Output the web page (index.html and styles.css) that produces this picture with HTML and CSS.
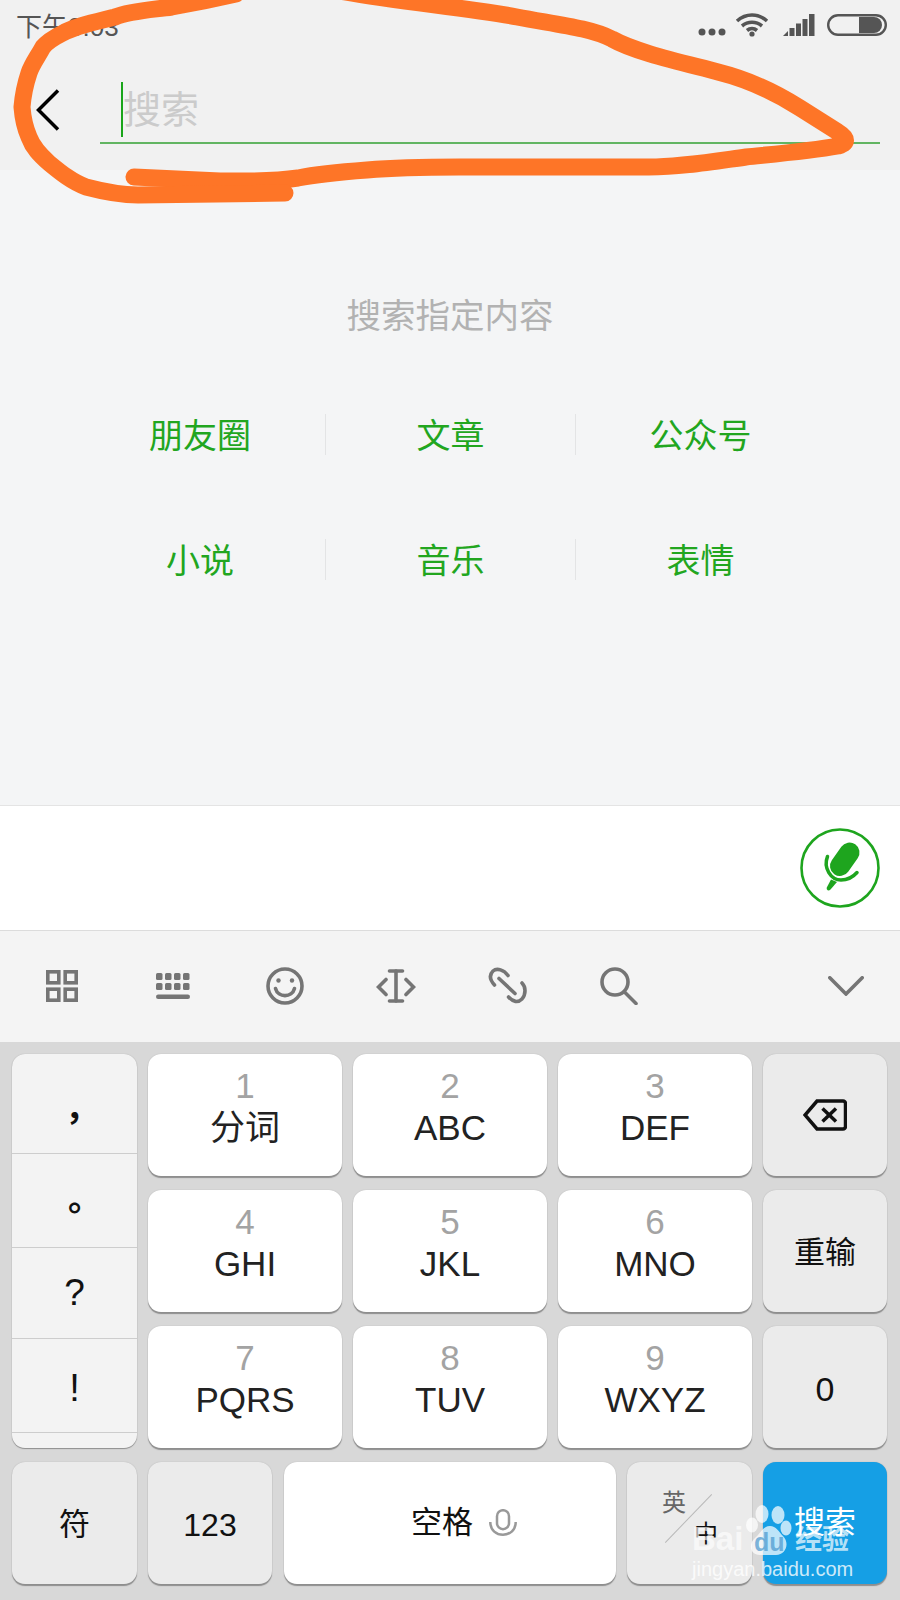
FILE: index.html
```html
<!DOCTYPE html>
<html>
<head>
  <meta charset="utf-8">
  <title>搜索</title>
  <link rel="stylesheet" href="styles.css">
</head>
<body>
  <div class="phone">
    <header class="top">
      <div class="status">
        <span class="time">下午3:03</span>
        <div class="status-icons">
          <svg class="dots" width="28" height="8" viewBox="0 0 28 8"><circle cx="4" cy="4" r="3.5"/><circle cx="14" cy="4" r="3.5"/><circle cx="24" cy="4" r="3.5"/></svg>
          <svg class="wifi" width="34" height="24" viewBox="0 0 34 24"><path d="M2 8 C11 0 23 0 32 8" /><path d="M7 13 C13 8 21 8 27 13" /><path d="M12 17.5 C15 15 19 15 22 17.5" /><circle cx="17" cy="21" r="2.6" class="fill"/></svg>
          <svg class="signal" width="32" height="22" viewBox="0 0 32 22"><path d="M0 22 L5 17 V22 Z"/><rect x="6.5" y="14" width="5" height="8"/><rect x="13" y="9.5" width="5" height="12.5"/><rect x="19.5" y="5" width="5" height="17"/><rect x="26" y="0" width="5.5" height="22"/></svg>
          <svg class="battery" width="60" height="22" viewBox="0 0 60 22"><rect x="1.2" y="1.2" width="57.6" height="19.6" rx="9.8"/><path class="fill" d="M32 3 H47 A8 8 0 0 1 47 19 H32 Z"/></svg>
        </div>
      </div>
      <div class="search-row">
        <svg class="back" width="24" height="42" viewBox="0 0 24 42"><path d="M22 1.5 L2.5 21 L22 40.5"/></svg>
        <div class="field">
          <div class="field-inner">
            <span class="caret"></span>
            <span class="placeholder">搜索</span>
          </div>
        </div>
      </div>
    </header>

    <main class="content">
      <p class="hint">搜索指定内容</p>
      <div class="options">
        <div class="option">朋友圈</div>
        <div class="option">文章</div>
        <div class="option">公众号</div>
        <div class="option">小说</div>
        <div class="option">音乐</div>
        <div class="option">表情</div>
      </div>
    </main>

    <div class="voice-bar">
      <svg class="voice-btn" width="80" height="80" viewBox="0 0 80 80">
        <circle class="ring" cx="40" cy="40" r="38.5"/>
        <path class="capsule" d="M49.5 24.5 L40 38"/>
        <path class="arc" d="M27.5 28.5 C23 40 31 52 41 52 C47 52 53 49 57 44.5"/>
        <path class="stem" d="M31 51.5 L37 54 L30.5 61.5 C28.5 63.5 26 62 26.8 59.5 Z"/>
      </svg>
    </div>

    <div class="tools">
      <div class="tool">
        <svg class="grid-icon" width="32" height="32" viewBox="0 0 32 32"><rect x="1.8" y="1.8" width="11" height="11"/><rect x="19.2" y="1.8" width="11" height="11"/><rect x="1.8" y="19.2" width="11" height="11"/><rect x="19.2" y="19.2" width="11" height="11"/></svg>
      </div>
      <div class="tool">
        <svg class="solid" width="34" height="26" viewBox="0 0 34 26"><rect x="0" y="0" width="6.5" height="7" rx="1.5"/><rect x="9" y="0" width="6.5" height="7" rx="1.5"/><rect x="18" y="0" width="6.5" height="7" rx="1.5"/><rect x="27" y="0" width="6.5" height="7" rx="1.5"/><rect x="0" y="10" width="6.5" height="7" rx="1.5"/><rect x="9" y="10" width="6.5" height="7" rx="1.5"/><rect x="18" y="10" width="6.5" height="7" rx="1.5"/><rect x="27" y="10" width="6.5" height="7" rx="1.5"/><rect x="0" y="21.5" width="34" height="4.5" rx="2.2"/></svg>
      </div>
      <div class="tool">
        <svg class="bold-icon" width="38" height="38" viewBox="0 0 38 38"><circle cx="19" cy="19" r="17"/><circle class="fill" cx="12.5" cy="13.5" r="2.2"/><circle class="fill" cx="26" cy="13.5" r="2.2"/><path d="M9.5 21.5 C12 31 26 31 28.5 21.5"/></svg>
      </div>
      <div class="tool">
        <svg class="bold-icon" width="40" height="34" viewBox="0 0 40 34"><path d="M10 10.5 L2.5 18 L10 25.5"/><path d="M30 10.5 L37.5 18 L30 25.5"/><path d="M20 2 V32"/><path d="M13.5 2 H26.5"/><path d="M13.5 32 H26.5"/></svg>
      </div>
      <div class="tool">
        <svg class="bold-icon" width="40" height="40" viewBox="0 0 40 40"><path d="M20 9.5 C16 4 9 1.5 5 5 C1 9 2 14 6.5 19"/><path d="M34 17 C38 21 38 28 34 33 C30 37 25 36 20.5 31"/><path d="M11 12.5 L27 27.5"/></svg>
      </div>
      <div class="tool">
        <svg class="bold-icon" width="38" height="38" viewBox="0 0 38 38"><circle cx="15" cy="15" r="13"/><path d="M24.5 25 L36 36.5"/></svg>
      </div>
      <div class="tool tool-last">
        <svg class="bold-icon" width="36" height="20" viewBox="0 0 36 20"><path d="M1.8 1.8 L18 18 L34.2 1.8"/></svg>
      </div>
    </div>

    <div class="keyboard">
      <div class="punct">
        <div class="punct-cell p1"><span class="cjk-mark">，</span></div>
        <div class="punct-cell p2"><span class="cjk-mark">。</span></div>
        <div class="punct-cell p3">?</div>
        <div class="punct-cell p4">!</div>
        <div class="punct-cell p5"></div>
      </div>
      <div class="key"><span class="num">1</span><span class="label">分词</span></div>
      <div class="key"><span class="num">2</span><span class="label">ABC</span></div>
      <div class="key"><span class="num">3</span><span class="label">DEF</span></div>
      <div class="key fn">
        <svg class="backspace" width="44" height="32" viewBox="0 0 44 32"><path d="M14 2 H40 A2.5 2.5 0 0 1 42.5 4.5 V27.5 A2.5 2.5 0 0 1 40 30 H14 L2 16 Z"/><path d="M19.5 9.5 L33 22.5"/><path d="M33 9.5 L19.5 22.5"/></svg>
      </div>
      <div class="key"><span class="num">4</span><span class="label">GHI</span></div>
      <div class="key"><span class="num">5</span><span class="label">JKL</span></div>
      <div class="key"><span class="num">6</span><span class="label">MNO</span></div>
      <div class="key fn"><span class="fn-text">重输</span></div>
      <div class="key"><span class="num">7</span><span class="label">PQRS</span></div>
      <div class="key"><span class="num">8</span><span class="label">TUV</span></div>
      <div class="key"><span class="num">9</span><span class="label">WXYZ</span></div>
      <div class="key fn"><span class="fn-text fn-zero">0</span></div>

      <div class="bottom-row">
        <div class="key fn w-fu"><span class="fn-text">符</span></div>
        <div class="key fn w-123"><span class="fn-text">123</span></div>
        <div class="key w-space">
          <span class="fn-text">空格</span>
          <svg class="space-mic" width="28" height="28" viewBox="0 0 28 28"><rect x="8" y="1.2" width="12" height="19" rx="6"/><path d="M1.3 13 C1.3 30 26.7 30 26.7 13"/></svg>
        </div>
        <div class="key fn w-lang">
          <span class="lang-en">英</span>
          <span class="lang-slash"></span>
          <span class="lang-cn">中</span>
        </div>
        <div class="key go"><span class="fn-text">搜索</span></div>
      </div>
    </div>

    <div class="watermark">
      <div class="wm-top">
        <span class="wm-bai">Bai</span>
        <span class="wm-paw">
          <svg width="47" height="51" viewBox="0 0 47 51"><ellipse cx="17" cy="9" rx="6.5" ry="9"/><ellipse cx="33" cy="10" rx="6.5" ry="9"/><ellipse cx="7" cy="20" rx="6" ry="7.5"/><ellipse cx="41" cy="23" rx="5.5" ry="7.5"/><path d="M25 21 C31 21 34 27 38 31 C45 38 41 50 31 50 H15 C5 50 3 39 10 33 C16 28 18 21 25 21 Z"/></svg>
          <span class="wm-du">du</span>
        </span>
        <span class="wm-cn">经验</span>
      </div>
      <div class="wm-url">jingyan.baidu.com</div>
    </div>

    <svg class="scribble" width="900" height="210" viewBox="0 0 900 210">
      <path d="M345 -8 C400 2 470 8 517 17 C560 25 590 28 612 39 C635 52 680 62 718 72 C750 80 775 92 800 108 L838 132 C848 138 848 143 838 146 C810 151 775 154 746 157 C710 162 680 167 649 167 L459 167 C420 167 390 168 367 170 C340 172 318 174 298 178 C270 182 245 181 220 181 L134 177"/>
      <path d="M236 -6 C210 0 195 3 172 7 C150 10 130 11 115 17 C95 22 75 26 63 33 C55 37 48 41 43 47 C37 58 32 64 29 73 C25 85 23 95 22 107 C23 120 25 128 29 137 C33 148 40 155 49 163 C60 172 72 182 86 187 C105 192 120 195 138 195 L285 193"/>
    </svg>
  </div>
</body>
</html>
```

FILE: styles.css
```css
html, body {
  margin: 0;
  padding: 0;
}

body {
  font-family: "Liberation Sans", "Noto Sans CJK SC", sans-serif;
  color: #111;
}

.phone {
  position: relative;
  width: 900px;
  height: 1600px;
  overflow: hidden;
  display: flex;
  flex-direction: column;
}

/* header */
.top {
  height: 170px;
  background-color: #f1f1f1;
}

.status {
  height: 52px;
  display: flex;
  justify-content: space-between;
  align-items: flex-start;
  padding: 0 13px 0 16px;
}

.time {
  font-size: 26px;
  line-height: 30px;
  margin-top: 12px;
  color: #555;
}

.status-icons {
  display: flex;
  align-items: flex-start;
  margin-top: 14px;
}

.dots {
  fill: #555;
  margin: 14px 0 0 0;
}

.wifi {
  margin: -1px 0 0 9px;
  fill: none;
  stroke: #555;
  stroke-width: 3.6;
}

.wifi .fill {
  fill: #555;
  stroke: none;
}

.signal {
  fill: #555;
  margin: 0 0 0 14px;
}

.battery {
  margin: 0 0 0 12px;
  fill: none;
  stroke: #555;
  stroke-width: 2.4;
}

.battery .fill {
  fill: #555;
  stroke: none;
}

.search-row {
  display: flex;
  padding-left: 36px;
}

.back {
  margin-top: 37px;
  fill: none;
  stroke: #000;
  stroke-width: 3.5;
}

.field {
  margin-left: 40px;
  width: 780px;
  height: 92px;
  box-sizing: border-box;
  border-bottom: 2px solid #62b562;
  display: flex;
  align-items: flex-end;
  padding: 0 0 5px 21px;
}

.field-inner {
  height: 55px;
  display: flex;
  align-items: center;
}

.caret {
  width: 2px;
  height: 55px;
  background-color: #1aa51a;
}

.placeholder {
  font-size: 38px;
  line-height: 55px;
  padding-top: 2px;
  color: #cbcbcb;
}

/* middle */
.content {
  height: 635px;
  background-color: #f4f5f6;
}

.hint {
  margin: 0;
  padding-top: 121px;
  font-size: 34.5px;
  line-height: 50px;
  color: #b2b2b2;
  text-align: center;
}

.options {
  margin-top: 73px;
  padding: 0 75px;
  display: grid;
  grid-template-columns: 250px 250px 250px;
  row-gap: 84px;
}

.option {
  height: 41px;
  line-height: 45px;
  font-size: 34px;
  color: #22a61f;
  text-align: center;
  box-sizing: border-box;
}

.option:nth-child(3n+2),
.option:nth-child(3n) {
  border-left: 1px solid #e3e4e5;
}

.voice-bar {
  height: 126px;
  box-sizing: border-box;
  background-color: #fff;
  border-top: 1px solid #e4e4e4;
  border-bottom: 1px solid #dcdcdc;
  display: flex;
  justify-content: flex-end;
  align-items: center;
  padding-right: 20px;
}

.voice-btn {
  fill: none;
  stroke: #1ea51e;
}

.voice-btn .ring {
  stroke-width: 2.6;
}

.voice-btn .capsule {
  stroke-width: 20;
  stroke-linecap: round;
}

.voice-btn .arc {
  stroke-width: 3.5;
  stroke-linecap: round;
}

.voice-btn .stem {
  fill: #1ea51e;
  stroke: none;
}

/* toolbar */
.tools {
  height: 111px;
  background-color: #f4f4f4;
  display: flex;
  align-items: center;
  padding: 0 36px 0 6px;
  box-sizing: border-box;
}

.tool {
  width: 111.5px;
  display: flex;
  justify-content: center;
  margin-top: -2px;
}

.tool svg {
  fill: none;
  stroke: #757575;
  stroke-width: 3;
  stroke-linecap: round;
}

.tool svg.bold-icon {
  stroke-width: 3.6;
}

.tool svg.grid-icon {
  stroke-width: 3.6;
  stroke-linecap: butt;
}

.tool svg.solid {
  fill: #757575;
  stroke: none;
}

.tool svg .fill {
  fill: #757575;
  stroke: none;
}

.tool-last {
  width: 36px;
  margin-left: auto;
}

/* keyboard */
.keyboard {
  flex: 1;
  background-color: #d8d8d8;
  padding: 12px 13px 0 12px;
  display: grid;
  grid-template-columns: 125px 194px 194px 194px 124px;
  grid-template-rows: 122px 122px 122px 122px;
  column-gap: 11px;
  row-gap: 14px;
}

.key {
  background-color: #fff;
  border-radius: 13px;
  box-shadow: 0 2px 1px #8e8e8e, 0 0 1px #a5a5a5;
  display: flex;
  flex-direction: column;
  align-items: center;
  padding-top: 10px;
  box-sizing: border-box;
}

.num {
  font-size: 35px;
  line-height: 43px;
  color: #a3a3a3;
}

.label {
  font-size: 35px;
  line-height: 42px;
  color: #222;
}

.fn {
  background-color: #ebebeb;
  justify-content: center;
  padding-top: 4px;
}

.go, .w-space {
  justify-content: center;
  padding-top: 0;
}

.fn-text {
  font-size: 31px;
  line-height: 40px;
}

.fn-zero {
  font-size: 34px;
}

.go {
  background-color: #159fe5;
  color: #fff;
}

.punct {
  grid-row: 1 / 4;
  background-color: #f3f3f3;
  border-radius: 13px;
  box-shadow: 0 1px 1px #8e8e8e, 0 0 1px #a5a5a5;
  display: flex;
  flex-direction: column;
  overflow: hidden;
}

.punct-cell {
  box-sizing: border-box;
  display: flex;
  justify-content: center;
  align-items: center;
  border-bottom: 1px solid #cdcdcd;
  font-size: 34px;
}

.p1 { height: 100px; padding-top: 26px; }
.p2 { height: 94px; padding-top: 14px; }
.p3 { height: 92px; padding-top: 0; font-size: 37px; }
.p4 { height: 94px; padding-top: 6px; font-size: 38px; }
.p5 { height: 15px; border-bottom: none; }

.cjk-mark {
  font-family: "Noto Sans CJK TC", sans-serif;
  font-weight: bold;
  line-height: 40px;
}

.bottom-row {
  grid-column: 1 / 6;
  display: flex;
}

.w-fu { width: 125px; margin-right: 11px; }
.w-123 { width: 124px; margin-right: 12px; }
.w-space { width: 332px; margin-right: 11px; flex-direction: row; padding-left: 28px; }
.w-lang { width: 125px; margin-right: 11px; position: relative; }
.go { width: 124px; }

.w-123 .fn-text { font-size: 32px; }

.space-mic {
  margin-left: 16px;
  fill: none;
  stroke: #999;
  stroke-width: 2.5;
}

.backspace {
  fill: none;
  stroke: #111;
  stroke-width: 3.5;
  margin-top: -4px;
}

.lang-en {
  position: absolute;
  left: 35px;
  top: 27px;
  font-size: 24px;
  line-height: 28px;
  color: #666;
}

.lang-cn {
  position: absolute;
  left: 67px;
  top: 58px;
  font-size: 24px;
  line-height: 28px;
  color: #111;
}

.lang-slash {
  position: absolute;
  left: 61px;
  top: 23px;
  width: 1px;
  height: 67px;
  background-color: #b8b8b8;
  transform: rotate(44deg);
}

/* overlays */
.watermark {
  position: absolute;
  left: 692px;
  top: 1502px;
  width: 165px;
  color: rgba(255, 255, 255, 0.8);
}

.wm-top {
  display: flex;
  align-items: flex-end;
  height: 54px;
}

.wm-bai {
  font-size: 33px;
  font-weight: bold;
  line-height: 34px;
  width: 53px;
  color: rgba(255, 255, 255, 0.65);
}

.wm-paw {
  position: relative;
  width: 47px;
  height: 51px;
  fill: rgba(255, 255, 255, 0.72);
}

.wm-du {
  position: absolute;
  left: 9px;
  bottom: 1px;
  font-size: 25px;
  font-weight: bold;
  line-height: 26px;
  color: rgba(70, 150, 205, 0.7);
}

.wm-cn {
  font-size: 27px;
  font-weight: bold;
  line-height: 32px;
  margin-left: 3px;
  color: rgba(255, 255, 255, 0.7);
}

.wm-url {
  margin-top: 1px;
  font-size: 20px;
  line-height: 24px;
  white-space: nowrap;
}

.scribble {
  position: absolute;
  left: 0;
  top: 0;
  fill: none;
  stroke: #fe7527;
  stroke-width: 17;
  stroke-linecap: round;
  stroke-linejoin: round;
}
```
